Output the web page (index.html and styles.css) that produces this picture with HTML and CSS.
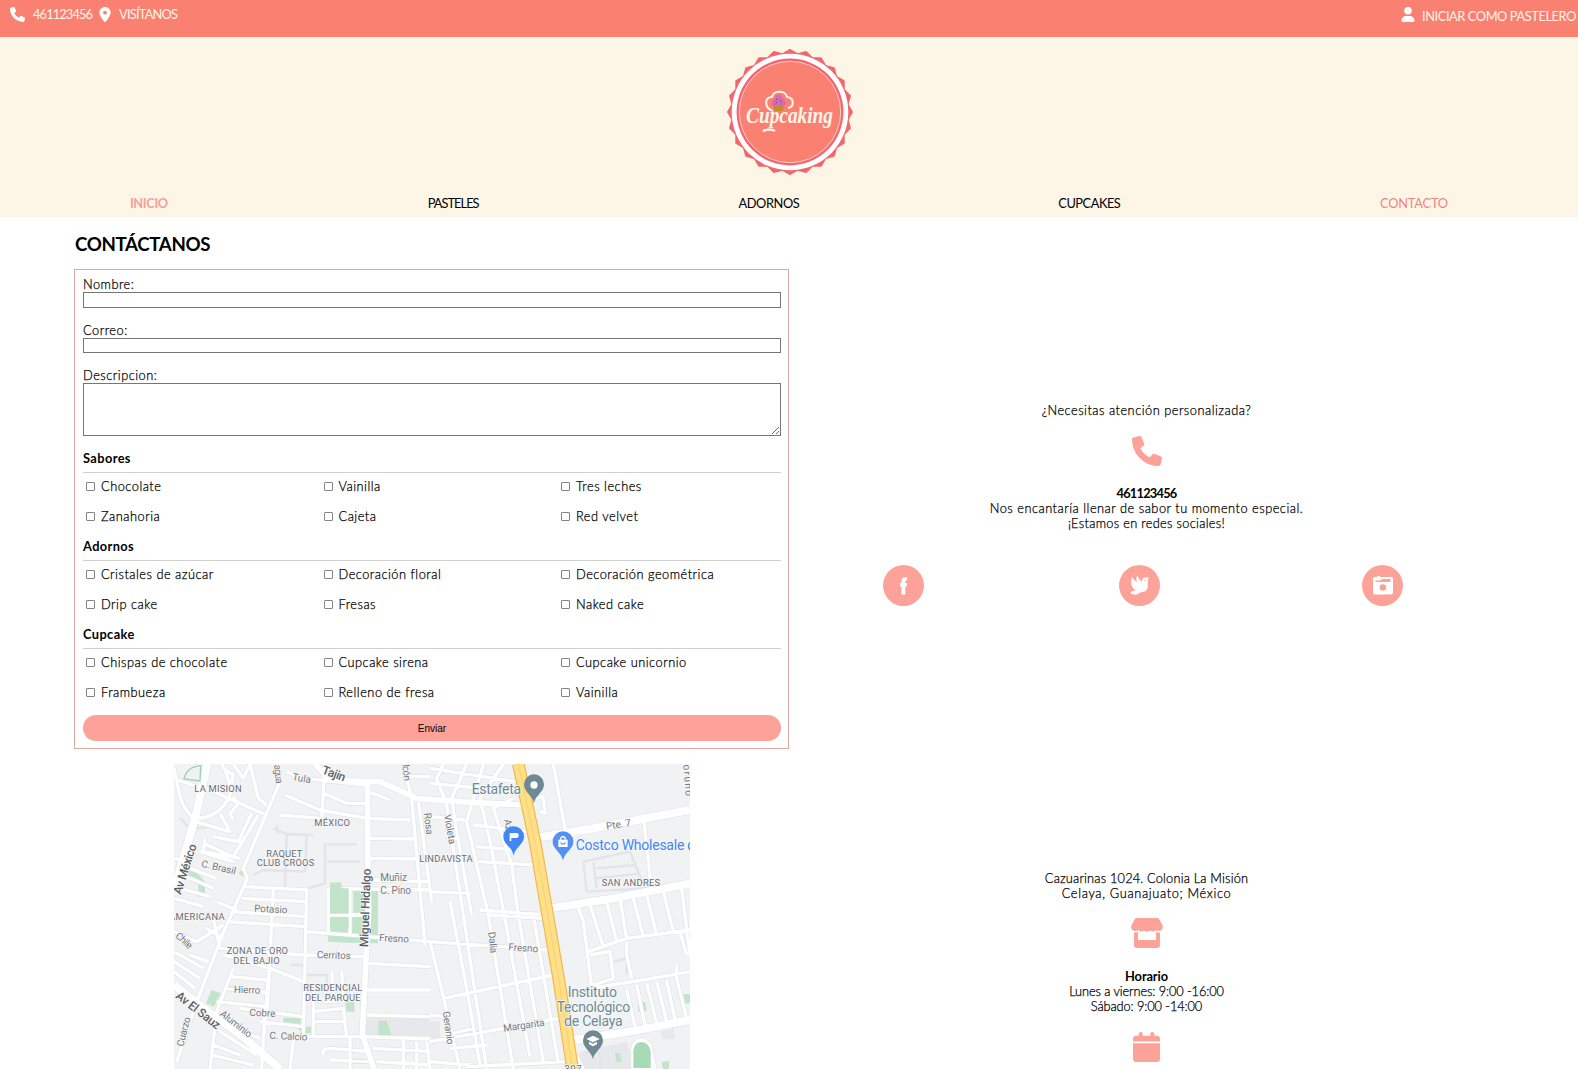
FILE: index.html
```html
<!DOCTYPE html>
<html lang="es">
<head>
<meta charset="utf-8">
<title>Cupcaking - Contacto</title>
<link rel="stylesheet" href="styles.css">
</head>
<body>
<svg class="defs" width="0" height="0">
  <symbol id="phone" viewBox="0 0 512 512"><path d="M511.2 387l-23.25 100.8c-3.266 14.25-15.79 24.22-30.46 24.22C205.2 512 0 306.8 0 54.5c0-14.66 9.969-27.2 24.22-30.45l100.8-23.25C139.7-2.602 154.7 5.018 160.8 18.92l46.52 108.5c5.438 12.78 1.77 27.67-8.98 36.45L144.5 207.1c33.98 69.22 90.26 125.5 159.5 159.5l44.08-53.8c8.688-10.78 23.69-14.51 36.47-8.975l108.5 46.51C506.1 357.2 514.6 372.4 511.2 387z"/></symbol>
</svg>
<div class="topbar">
  <svg class="ico"><use href="#phone"/></svg>
  <span class="tel">461123456</span>
  <svg class="ico pin" viewBox="0 0 384 512"><path d="M215.7 499.2C267 435 384 279.4 384 192C384 86 298 0 192 0S0 86 0 192c0 87.4 117 243 168.3 307.2c12.3 15.3 35.1 15.3 47.4 0zM192 128a64 64 0 1 1 0 128 64 64 0 1 1 0-128z"/></svg>
  <span class="visit">VISÍTANOS</span>
  <svg class="ico user" viewBox="0 0 448 512"><path d="M224 256A128 128 0 1 0 224 0a128 128 0 1 0 0 256zM160 304C72 304 0 376 0 464c0 27 21 48 48 48H400c27 0 48-21 48-48C448 376 376 304 288 304H160z"/></svg>
  <span class="login">INICIAR COMO PASTELERO</span>
</div>
<header>
  <svg class="logo" viewBox="-64 -64 128 128">
    <defs><path id="hex" d="M62.300 0L31.150 54L-31.150 54L-62.300 0L-31.150 -54L31.150 -54Z"/></defs>
    <g class="scallop">
      <use href="#hex"/>
      <use href="#hex" transform="rotate(15)"/>
      <use href="#hex" transform="rotate(30)"/>
      <use href="#hex" transform="rotate(45)"/>
    </g>
    <circle r="58.3" fill="#fff"/>
    <circle r="53.4" fill="#f4666d"/>
    <circle r="50.7" fill="#fa8072" stroke="#fde5dc" stroke-width=".8"/>
    <path d="M-17 -1C-26-4-26-15-18-15C-17-22-4-22-3-15C5-14 4-5-2-4" fill="none" stroke="#fff5ea" stroke-width="2"/>
    <text x="-44" y="11" textLength="87" lengthAdjust="spacingAndGlyphs" class="brand">Cupcaking</text>
    <path d="M-18-7C-19-11-16-12-15-14C-13-18-9-18-8-14C-5-12-4-9-5-7Z" fill="#cf6ab6"/>
    <path d="M-17-7H-6L-7.500-1H-15.500Z" fill="#c98a2e"/>
    <path d="M-14-13l1 1m3 1l1 1m-5 0l1 1" stroke="#6b3f91" stroke-width="1"/>
    <path d="M-27 19Q-20 16-15 19" fill="none" stroke="#fff5ea" stroke-width="2.500"/>
  </svg>
  <nav>
    <a class="n1">INICIO</a><a class="n2">PASTELES</a><a class="n3">ADORNOS</a><a class="n4">CUPCAKES</a><a class="n5">CONTACTO</a>
  </nav>
</header>
<main>
  <h1>CONTÁCTANOS</h1>
  <form>
    <label>Nombre:</label><input class="field first" type="text">
    <label>Correo:</label><input class="field" type="text">
    <label>Descripcion:</label><textarea></textarea>
    <h2>Sabores</h2>
    <div class="opts">
      <label><input type="checkbox">Chocolate</label><label><input type="checkbox">Vainilla</label><label><input type="checkbox">Tres leches</label>
      <label><input type="checkbox">Zanahoria</label><label><input type="checkbox">Cajeta</label><label><input type="checkbox">Red velvet</label>
    </div>
    <h2>Adornos</h2>
    <div class="opts">
      <label><input type="checkbox">Cristales de azúcar</label><label><input type="checkbox">Decoración floral</label><label><input type="checkbox">Decoración geométrica</label>
      <label><input type="checkbox">Drip cake</label><label><input type="checkbox">Fresas</label><label><input type="checkbox">Naked cake</label>
    </div>
    <h2>Cupcake</h2>
    <div class="opts">
      <label><input type="checkbox">Chispas de chocolate</label><label><input type="checkbox">Cupcake sirena</label><label><input type="checkbox">Cupcake unicornio</label>
      <label><input type="checkbox">Frambueza</label><label><input type="checkbox">Relleno de fresa</label><label><input type="checkbox">Vainilla</label>
    </div>
    <button type="button">Enviar</button>
  </form>
  <section class="info">
    <p>¿Necesitas atención personalizada?</p>
    <svg class="big"><use href="#phone"/></svg>
    <p><b class="num">461123456</b></p>
    <p>Nos encantaría llenar de sabor tu momento especial.</p>
    <p class="tight">¡Estamos en redes sociales!</p>
    <div class="social">
      <a><svg viewBox="0 0 41 41"><path d="M18.500 29.500V21.500H17V18H18.500V16Q18.500 12.200 22 12.200H24V15.500H22.800Q22.300 15.500 22.300 16.500V18H24L23.700 21.500H22.300V29.500Z"/></svg></a>
      <a><svg viewBox="0 0 41 41"><path d="M13 11.500C14 14 15.500 15.600 18.800 17C16.500 14.500 17 12 18.800 10.500C19.200 13.500 21 15 23 17V16C23 13.600 25 12.500 26.500 12.500H30L28.800 14.800V21C28.800 25 26 27 22.500 27.200L21 27.500C19 29.700 16.500 29.800 14.800 29.600C13 29.200 11.500 28.500 11.500 27.500C12.500 26.200 15 26 16.500 25C13 23.500 11 19 13 11.500Z"/><circle cx="26.300" cy="15.500" r=".7" fill="#fca298"/></svg></a>
      <a><svg viewBox="0 0 41 41"><path fill-rule="evenodd" d="M12 12H15V11H18V12H29Q31 12 31 14V27.500Q31 29.500 29 29.500H13Q11 29.500 11 27.500V14Q11 12.500 12 12ZM13.500 15.500V17H28.500V14H20L18 15.500ZM24.200 22.500A3.300 3.300 0 1 0 17.600 22.500A3.300 3.300 0 1 0 24.200 22.500Z"/></svg></a>
    </div>
  </section>
  <div class="mapbox">
  <svg class="map" viewBox="12 27 1548 915" preserveAspectRatio="none">
    <defs>
      <path id="minor" d="M12 40L25 100Q30 150 70 190M25 75L95 100M155 27Q185 80 180 120Q150 190 75 190M110 100L265 170L290 180M160 40L190 60L185 85M190 27L220 70L240 27M240 27L265 130L290 150M190 125L205 145L180 175L190 195M150 175L180 230L75 200M330 80L220 340L232 370L155 545L75 755L20 920M265 180L190 305L100 265M90 290L190 320M105 250L100 290L210 310M130 245L205 260L245 175M12 310L60 320M60 340L140 370M50 365L130 400M30 400L120 425M12 430L100 455M140 440L200 465M345 120L450 165L590 190L720 195M330 180L450 190M350 50L400 70L590 90M465 27L455 190M460 115L530 145H590M595 110L660 135M600 250L735 252M600 310L740 312M610 375L780 380M475 400L780 405M700 27L725 130L765 570M745 140L785 440M715 65H780M225 395L410 405L400 845M215 430L410 440M190 470L410 485M170 500L410 515M310 400L300 600L275 930M475 400L475 530M540 400L540 540M110 520L160 550M130 490L150 580L400 600M410 530L780 560M400 600L580 605M590 625L780 635M590 705L780 705M590 780L780 785M400 845H580L780 852M480 480H600M12 530L80 560L160 510M12 590L100 640M12 620L90 670M12 650L75 700M60 600L115 620M160 600L300 640L400 680M190 640L140 770L120 942M180 665L290 675M165 700L290 712M140 740L290 755M210 760L400 785M140 800L270 850M150 830L260 900M270 800L400 815M285 760L275 942M300 640L290 780M370 860L360 942M430 700L430 845M430 770L520 760L530 845M430 800L520 800M465 740L550 735M130 870L210 900M125 900L250 930M460 900Q455 880 480 880L600 890M480 915L610 920M540 845V942M610 880L780 890M620 920L780 930M700 850V942M740 860V942M770 860L780 942M485 650L490 720M515 650L520 720M780 40L1035 80M780 85L1040 110M820 27L800 70L830 150L880 480L950 942M890 27L845 130L860 230L905 480M940 27L890 200L955 480L1030 942M1000 27L930 130L960 260L1000 465L1080 905M1030 130L970 160L1025 330L1045 480L1120 920M780 185L885 195M830 245L870 250M910 210L1075 230M920 275L1030 285M925 320L1095 330M780 410L900 415M930 465L1110 478M960 480L1120 490M780 560L1135 585M820 730L1150 660M780 860L1170 790M890 935L1190 920M780 560L820 725L870 942M840 440L890 700L930 930M1090 480L1165 925M830 840L910 820M840 880L950 870M780 780L830 785M780 920L900 930M1110 170L1125 175L1120 125L1095 130M1150 27L1185 222M1420 180L1445 410M1225 455L1240 500L1265 695M1260 450L1300 575M1310 440L1340 560M1350 430L1370 555M1390 430L1420 545M1430 420L1460 540M1480 410L1510 530M1535 400L1560 600M1255 590L1370 550L1560 525M1260 600L1320 590L1330 670L1270 690M1260 700L1420 675L1560 650M1370 560V600L1385 670M1530 530L1550 600M1370 705L1395 815M1400 690L1425 810M1430 685L1460 805M1460 680L1490 800M1490 675L1515 795M1520 670L1550 790M1520 630V670M1215 895L1240 942M1390 942V870Q1415 840 1440 870L1455 942"/>
      <path id="medium" d="M435 27L480 75L590 80H630L740 130L900 142L1060 150M592 80L595 470L577 840L612 942"/>
      <path id="major" d="M112 27L75 190L12 405M12 690L100 760L200 830L330 942M1090 250L1260 222L1560 165M1140 460L1330 430L1560 385M1210 855L1380 830L1560 795"/>
      <path id="highway" d="M1045 27L1095 260L1133 480L1165 665L1208 942"/>
    </defs>
    <rect x="12" y="27" width="1548" height="915" fill="#f1f2f4"/>
    <path d="M590 785H780V842H580ZM780 800H810V850H780ZM1230 890L1370 860L1400 942H1215ZM1470 830L1510 820L1515 850L1480 855Z" fill="#e7e8ec"/>
    <path d="M480 383H514V400H540V480H480ZM550 405H624V565L475 560V480H550ZM60 330L105 380V425H85V390L50 370ZM205 355L220 340V365ZM125 705L152 715L132 755L108 745ZM340 788L392 790V812L340 810ZM375 815H425V835H400ZM525 740H553V770H530ZM625 797H650L665 840H625ZM1405 742L1425 740L1430 768L1405 770ZM1540 718H1560V745H1545ZM1335 895H1350L1355 920H1338ZM1475 920L1497 918V942H1478Z" fill="#c2e4cb"/>
    <g class="faint"><path d="M310 220L350 237L430 240M320 210L325 235M350 237L345 395M250 360L280 345L405 350L410 240M470 268H560M470 320H570M465 265V385L415 400M30 190L60 220M80 220L140 215M360 630H400M410 660H470V690M1240 320L1380 290L1425 400L1250 410ZM1270 320L1280 400M1280 340L1400 330M1280 370L1410 355M1330 620L1370 610V660M1250 890L1290 895V942"/></g>
    <g class="case"><use href="#minor" stroke-width="14"/><use href="#medium" stroke-width="21"/><use href="#major" stroke-width="28"/></g>
    <g class="road"><use href="#minor" stroke-width="10"/><use href="#medium" stroke-width="17"/><use href="#major" stroke-width="24"/></g>
    <path d="M480 383H514V400H536V476H480ZM552 410H572V470H552ZM608 410H624V470H608ZM480 486H536V522L480 518ZM552 486H570V528L552 526ZM606 486H622V532L606 530ZM475 542L566 548V564L475 560Z" fill="#c2e4cb"/>
    <path d="M42 72Q50 35 92 32L90 78Z" fill="#f1f2f4" stroke="#9bd0b4" stroke-width="4"/>
    <use href="#highway" fill="none" stroke="#efb94b" stroke-width="38"/>
    <use href="#highway" fill="none" stroke="#ffdf87" stroke-width="31"/>
    <use href="#highway" fill="none" stroke="#f5ca65" stroke-width="2"/>
    <path d="M1387 942V888Q1390 858 1415 858Q1440 860 1445 890V942Z" fill="#a8dab5" stroke="#fff" stroke-width="6"/>
    <g class="lbl">
      <text x="73" y="110" textLength="142">LA MISION</text>
      <text x="433" y="214" textLength="107">MÉXICO</text>
      <text x="289" y="305" textLength="108">RAQUET</text>
      <text x="260" y="334" textLength="173">CLUB CROOS</text>
      <text x="748" y="320" textLength="160">LINDAVISTA</text>
      <text x="1295" y="392" textLength="175">SAN ANDRES</text>
      <text x="-3" y="496" textLength="167">AMERICANA</text>
      <text x="170" y="596" textLength="184">ZONA DE ORO</text>
      <text x="190" y="626" textLength="139">DEL BAJIO</text>
      <text x="400" y="707" textLength="177">RESIDENCIAL</text>
      <text x="405" y="737" textLength="167">DEL PARQUE</text>
    </g>
    <g class="lbl st">
      <text x="366" y="75" textLength="56" transform="rotate(10 366 75)">Tula</text>
      <text x="92" y="335" textLength="106" transform="rotate(13 92 335)">C. Brasil</text>
      <text x="631" y="379" textLength="80">Muñiz</text>
      <text x="631" y="418" textLength="92">C. Pino</text>
      <text x="252" y="470" textLength="100" transform="rotate(3 252 470)">Potasio</text>
      <text x="627" y="558" textLength="89" transform="rotate(3 627 558)">Fresno</text>
      <text x="440" y="609" textLength="102" transform="rotate(2 440 609)">Cerritos</text>
      <text x="191" y="713" textLength="80" transform="rotate(2 191 713)">Hierro</text>
      <text x="238" y="782" textLength="78" transform="rotate(3 238 782)">Cobre</text>
      <text x="298" y="851" textLength="114" transform="rotate(3 298 851)">C. Calcio</text>
      <text x="148" y="780" textLength="112" transform="rotate(38 148 780)">Aluminio</text>
      <text x="40" y="876" textLength="90" transform="rotate(-76 40 876)">Cuarzo</text>
      <text x="14" y="545" textLength="58" transform="rotate(42 14 545)">Chile</text>
      <text x="312" y="30" textLength="57" transform="rotate(84 312 30)">agua</text>
      <text x="697" y="29" textLength="50" transform="rotate(84 697 29)">lcón</text>
      <text x="762" y="175" textLength="65" transform="rotate(84 762 175)">Rosa</text>
      <text x="822" y="180" textLength="90" transform="rotate(80 822 180)">Violeta</text>
      <text x="1002" y="194" textLength="34" transform="rotate(80 1002 194)">Az</text>
      <text x="1310" y="224" textLength="75" transform="rotate(-9 1310 224)">Pte. 7</text>
      <text x="955" y="532" textLength="64" transform="rotate(84 955 532)">Dalia</text>
      <text x="1015" y="586" textLength="89" transform="rotate(4 1015 586)">Fresno</text>
      <text x="818" y="770" textLength="100" transform="rotate(82 818 770)">Geranio</text>
      <text x="1001" y="830" textLength="125" transform="rotate(-8 1001 830)">Margarita</text>
      <text class="edge" x="1540" y="29" textLength="95" transform="rotate(86 1540 29)">oruno</text>
      <text class="edge" x="1183" y="955" textLength="52">397</text>
    </g>
    <g class="lbl ave">
      <text x="454" y="55" textLength="72" transform="rotate(20 454 55)">Tajin</text>
      <text x="32" y="420" textLength="156" transform="rotate(-72 32 420)">Av México</text>
      <text x="15" y="727" textLength="158" transform="rotate(38 15 727)">Av El Sauz</text>
      <text x="594" y="577" textLength="236" transform="rotate(-88 594 577)">Miguel Hidalgo</text>
    </g>
    <g class="poi">
      <text x="905" y="116" textLength="148">Estafeta</text>
      <text x="1193" y="727" textLength="148">Instituto</text>
      <text x="1160" y="770" textLength="221">Tecnológico</text>
      <text x="1182" y="813" textLength="176">de Celaya</text>
      <text x="1217" y="285" textLength="326" fill="#4285f4">Costco Wholesale</text>
      <path d="M1560 262Q1551 273 1560 285" fill="none" stroke="#4285f4" stroke-width="4"/>
    </g>
    <g transform="translate(1092 59)"><path d="M0 86C-4 62-30 54-30 29A30 30 0 0 1 30 29C30 54 4 62 0 86Z" fill="#6c8994"/><circle cy="31" r="11" fill="#fff"/></g>
    <g transform="translate(1031 214)"><path d="M0 88C-4 62-31 54-31 31A31 31 0 0 1 31 31C31 54 4 62 0 88Z" fill="#4285f4"/><path d="M-12 44V20H10Q15 20 15 27Q15 35 8 35H-7V44Z" fill="#fff"/></g>
    <g transform="translate(1179 229)"><path d="M0 88C-4 62-31 54-31 31A31 31 0 0 1 31 31C31 54 4 62 0 88Z" fill="#5591f5"/><path d="M-14 25H14V47H-14Z" fill="#fff"/><path d="M-7 25V21Q0 10 7 21V25" fill="none" stroke="#fff" stroke-width="4"/><path d="M-7 34Q0 43 7 34" fill="none" stroke="#5591f5" stroke-width="4"/></g>
    <g transform="translate(1269 827)"><path d="M0 86C-4 62-30 54-30 29A30 30 0 0 1 30 29C30 54 4 62 0 86Z" fill="#6c8994"/><path d="M-20 25L0 15L20 25L0 35ZM-12 33L0 39L12 33V41L0 47L-12 41Z" fill="#fff"/></g>
  </svg>
  </div>
  <section class="info place">
    <p class="addr">Cazuarinas 1024. Colonia La Misión</p>
    <p class="city">Celaya, Guanajuato; México</p>
    <svg class="store" viewBox="0 0 32 30"><path d="M5.500 0H26.500Q27.500 0 28 1L31.500 7Q32.500 10 30.500 12Q28 14 25 12Q22 14.500 19.500 12.500Q16 14.500 12.500 12.500Q10 14.500 7 12Q4 14 1.500 12Q-.5 10 .5 7L4 1Q4.500 0 5.500 0ZM3 14.500Q5 14.800 7 14V22H25V14Q27 14.800 29 14.500V27Q29 30 26 30H6Q3 30 3 27Z"/></svg>
    <p><b class="hours">Horario</b></p>
    <p class="days">Lunes a viernes: 9:00 -16:00</p>
    <p class="days">Sábado: 9:00 -14:00</p>
    <svg class="cal" viewBox="0 0 448 512" preserveAspectRatio="none"><path d="M96 32V64H48C21.500 64 0 85.500 0 112v48H448V112c0-26.500-21.500-48-48-48H352V32c0-17.700-14.300-32-32-32s-32 14.300-32 32V64H160V32c0-17.700-14.300-32-32-32S96 14.300 96 32zM448 192H0V464c0 26.500 21.500 48 48 48H400c26.500 0 48-21.500 48-48V192z"/></svg>
  </section>
</main>
</body>
</html>
```
FILE: styles.css
```css
* { box-sizing: border-box; margin: 0; padding: 0; }
body {
  height: 1069px;
  overflow: hidden;
  background: #fff;
  color: #000;
  font: 300 12.8px/15px "Century Gothic", Lato, sans-serif;
  letter-spacing: .5px;
}
.defs { position: absolute; }
svg { display: block; flex: none; }
label, p { -webkit-text-stroke: .25px #000; }
b { -webkit-text-stroke: 0; font-weight: 700; }

.topbar {
  display: flex;
  align-items: flex-start;
  height: 37px;
  padding: 7px 0 0 10px;
  background: #fa8072;
  color: #fdf5e6;
  font-weight: 400;
}
.ico { width: 15px; height: 15px; fill: #fff; }
.tel { width: 59px; height: 15px; margin-left: 8px; letter-spacing: -.85px; }
.pin { width: 12px; margin-left: 7px; }
.visit { margin-left: 8px; letter-spacing: -.75px; }
.user { width: 14px; margin-left: auto; }
.login { width: 156px; margin: 2px 0 0 7px; white-space: nowrap; letter-spacing: -.4px; }

header { height: 180px; padding-top: 11px; background: #fdf5e6; }
.logo { width: 128px; height: 128px; margin: 0 auto; transform: translateX(1px); }
.scallop { fill: #f4666d; stroke: #f4666d; stroke-width: 1.5; stroke-linejoin: round; }
.brand { font: italic bold 23px "Liberation Serif", serif; fill: #fff5ea; letter-spacing: 0; }
nav { display: flex; justify-content: space-around; margin-top: 20px; font-weight: 400; letter-spacing: -.2px; }
nav a { display: flex; white-space: nowrap; }
.n1 { width: 38px; color: #f4a09a; font-weight: bold; letter-spacing: -.35px; }
.n2 { width: 51px; letter-spacing: -.95px; }
.n3 { width: 60px; letter-spacing: -.4px; }
.n4 { width: 62px; letter-spacing: -.45px; }
.n5 { width: 68px; color: #ee8583; }

main {
  display: grid;
  grid-template-columns: 715px 715px;
  grid-template-rows: 52px 480px 320px;
  padding: 0 74px;
}
h1 { grid-column: 1 / 3; padding: 16px 0 0 1px; font-size: 18.7px; line-height: 22px; letter-spacing: -.35px; }
form {
  display: flex;
  flex-direction: column;
  padding: 7px 7px 0 8px;
  border: 1px solid #e3a6a0;
}
form > label { height: 15px; }
.field, textarea { width: 698px; border: 1px solid #767676; outline: 0; }
.field { height: 15px; margin-bottom: 15px; }
.field.first { height: 16px; }
textarea { height: 53px; margin-bottom: 15px; }
h2 { height: 22px; width: 698px; border-bottom: 1px solid #d0d0d0; font-size: 12.8px; line-height: 15px; letter-spacing: .4px; }
.opts { display: grid; grid-template-columns: 237.5px 237.5px 1fr; grid-auto-rows: 30px; height: 66px; padding-top: 6px; }
.opts label { display: flex; height: 15px; white-space: nowrap; }
.opts input { appearance: none; width: 9px; height: 9px; margin: 3px 6px 0 3px; border: 1px solid #858585; border-radius: 1px; }
button {
  height: 26px;
  width: 698px;
  border: 0;
  border-radius: 13px;
  background: #fca298;
  font: 10px "Liberation Sans", Arial, sans-serif;
  letter-spacing: 0;
}
.info { display: flex; flex-direction: column; align-items: center; padding-top: 134px; }
.info p { white-space: nowrap; }
.info svg { fill: #fca298; }
.big { width: 30px; height: 30px; margin: 18px 0 20px; }
.num { letter-spacing: -.75px; }
.tight { letter-spacing: .3px; }
.social { display: flex; align-self: flex-start; margin: 34px 0 0 94px; }
.social a { width: 41px; height: 41px; border-radius: 50%; background: #fca298; }
.social a svg { fill: #fff; }
.social a + a { margin-left: 195px; }
.social a + a + a { margin-left: 202px; }
.place { padding-top: 122px; }
.addr { letter-spacing: .17px; }
.city { letter-spacing: .65px; }
.hours { letter-spacing: -.1px; }
.days { letter-spacing: -.1px; }
.store { width: 32px; height: 30px; margin: 17px 0 21px; }
.cal { width: 27px; height: 30px; margin-top: 18px; }

.mapbox { padding: 15px 0 0 100px; }
.map { width: 516px; height: 305px; font-family: Roboto, sans-serif; font-weight: 400; letter-spacing: 0; }
.case, .road, .faint { fill: none; stroke-linejoin: round; }
.case { stroke: #e2e4e7; }
.road { stroke: #fff; }
.faint { stroke: #e2e4e7; stroke-width: 7; }
.lbl { font-size: 28px; fill: #686b70; stroke: #f8f9fa; stroke-width: 4; paint-order: stroke; }
.st { font-size: 30px; fill: #75787d; }
.ave { font-size: 36px; font-weight: 500; fill: #5c5f64; }
.poi { font-size: 42px; fill: #6c8994; stroke: #f8f9fa; stroke-width: 4; paint-order: stroke; }
```
